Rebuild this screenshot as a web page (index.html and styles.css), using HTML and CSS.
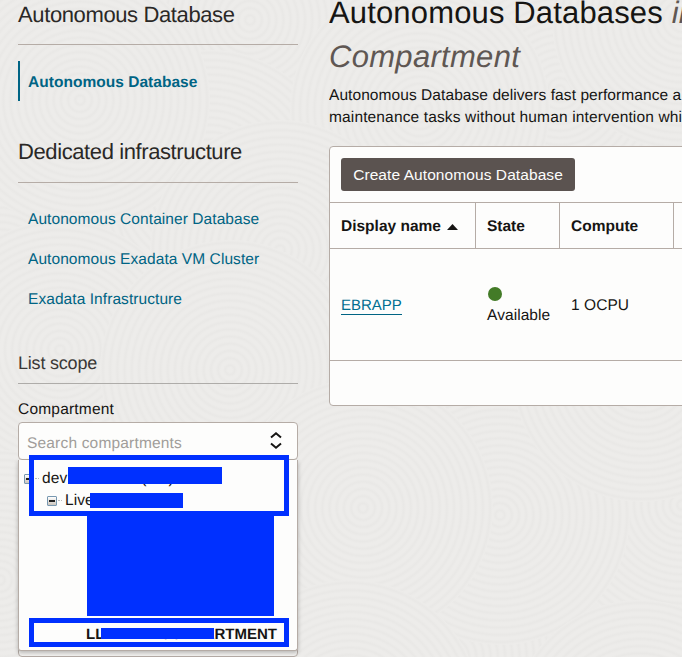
FILE: index.html
```
<!DOCTYPE html>
<html lang="en">
<head>
<meta charset="utf-8">
<title>Autonomous Databases</title>
<link rel="stylesheet" href="styles.css">
</head>
<body>
<svg class="texture" width="682" height="657" aria-hidden="true">
  <defs>
    <radialGradient id="ring" gradientUnits="userSpaceOnUse" cx="0" cy="0" r="7.2" spreadMethod="repeat">
      <stop offset="0" stop-color="#edecea"/><stop offset=".3" stop-color="#edecea"/><stop offset=".65" stop-color="#e9e8e6"/><stop offset="1" stop-color="#edecea"/>
    </radialGradient>
    <circle id="disc" r="130" fill="url(#ring)"/>
  </defs>
  <use href="#disc" x="300" y="-20"/><use href="#disc" x="560" y="90"/>
  <use href="#disc" x="250" y="20"/><use href="#disc" x="0" y="0"/>
  <use href="#disc" x="682" y="20"/><use href="#disc" x="210" y="180"/>
  <use href="#disc" x="420" y="110"/><use href="#disc" x="0" y="270"/>
  <use href="#disc" x="80" y="100"/><use href="#disc" x="280" y="250"/>
  <use href="#disc" x="60" y="350"/><use href="#disc" x="230" y="370"/>
  <use href="#disc" x="0" y="580"/><use href="#disc" x="450" y="657"/>
  <use href="#disc" x="682" y="505"/><use href="#disc" x="500" y="410"/>
  <use href="#disc" x="500" y="515"/><use href="#disc" x="363" y="508"/>
  <use href="#disc" x="642" y="372"/><use href="#disc" x="350" y="710"/>
  <use href="#disc" x="640" y="730"/>
</svg>
<div class="page">
  <aside class="sidebar">
    <h2 class="side-title">Autonomous Database</h2>
    <nav class="side-nav"><a class="nav-link active">Autonomous Database</a></nav>
    <h2 class="side-title second">Dedicated infrastructure</h2>
    <nav class="side-nav links">
      <a class="nav-link">Autonomous Container Database</a>
      <a class="nav-link">Autonomous Exadata VM Cluster</a>
      <a class="nav-link">Exadata Infrastructure</a>
    </nav>
    <h3 class="scope-title">List scope</h3>
    <label class="field-label">Compartment</label>
    <div class="picker">
      <div class="search">
        <span class="placeholder">Search compartments</span>
        <svg class="chevrons" width="12" height="17" viewBox="0 0 12 17"><path d="M1 5.5 6 1.3l5 4.2M1 11.5l5 4.2 5-4.2" fill="none" stroke="#161513" stroke-width="2"/></svg>
      </div>
      <div class="menu">
        <div class="node root"><span class="toggle"></span><span class="dots"></span><span>dev</span><span class="paren">(</span><span class="paren close">)</span></div>
        <div class="node child"><span class="toggle"></span><span class="dots"></span><span>Live</span></div>
        <div class="node leaf"><span>LL</span><span>COMPARTMENT</span></div>
        <span class="mark frame-top"></span>
        <span class="mark cover-root"></span>
        <span class="mark cover-child"></span>
        <span class="mark cover-block"></span>
        <span class="mark frame-bottom"></span>
        <span class="mark cover-leaf"></span>
      </div>
      <div class="under"></div>
    </div>
  </aside>
  <main class="content">
    <h1 class="title">Autonomous Databases <em>in</em><br><em class="comp">Compartment</em></h1>
    <p class="lead">Autonomous Database delivers fast performance a<br><span class="lead-second">maintenance tasks without human intervention whi</span></p>
    <section class="panel">
      <div class="toolbar"><button class="create">Create Autonomous Database</button></div>
      <div class="row head">
        <div class="cell">Display name<svg class="sort" width="11" height="6" viewBox="0 0 11 6"><path d="M0 6 5.5 0 11 6z" fill="#161513"/></svg></div>
        <div class="cell">State</div>
        <div class="cell compute">Compute</div>
        <div class="cell"></div>
      </div>
      <div class="row body">
        <div class="cell"><a class="db">EBRAPP</a></div>
        <div class="cell state"><span class="status"></span><span>Available</span></div>
        <div class="cell">1 OCPU</div>
        <div class="cell"></div>
      </div>
      <div class="foot"></div>
    </section>
  </main>
</div>
</body>
</html>
```
FILE: styles.css
```
* { box-sizing: border-box; }
body { margin: 0; width: 682px; height: 657px; overflow: hidden; background: #ecebe9; color: #161513; font: 15.5px/22px "Liberation Sans", Arial, sans-serif; letter-spacing: .07px; text-rendering: geometricPrecision; }
.texture { position: absolute; inset: 0; z-index: -1; }
.page { display: flex; gap: 31px; padding-left: 18px; width: 682px; height: 657px; overflow: hidden; }
.sidebar { width: 280px; flex: none; }
.side-title { margin: 0; height: 45px; border-bottom: 1px solid #b5aca6; font-size: 22px; line-height: 30px; font-weight: 400; letter-spacing: -.38px; color: #2a2826; }
.side-title.second { margin-top: 36px; height: 46px; letter-spacing: -.4px; }
.side-nav { display: flex; flex-direction: column; padding-top: 16px; }
.nav-link { height: 40px; padding-left: 10px; line-height: 43px; color: #006484; }
.links .nav-link { line-height: 41px; }
.nav-link.active { padding-left: 8px; border-left: 2px solid #006484; font-weight: 700; letter-spacing: .03px; }
.scope-title { margin: 30px 0 0; height: 35px; line-height: 29px; border-bottom: 1px solid #aeaca9; font-size: 18px; font-weight: 400; letter-spacing: -.2px; color: #3a3836; }
.field-label { display: block; margin-top: 14px; height: 24px; line-height: 23px; letter-spacing: .2px; }
.picker { position: relative; }
.search { display: flex; align-items: center; justify-content: space-between; height: 38px; padding: 5px 15px 0 8px; border: 1px solid #b5aca6; border-radius: 4px; background: #fdfdfc; color: #a19d9a; letter-spacing: .18px; }
.chevrons { margin-top: -7px; }
.menu { position: relative; z-index: 1; height: 191px; padding-top: 7px; border: 1px solid #b5aca6; border-top: 0; border-radius: 0 0 3px 3px; background: #fdfdfc; box-shadow: 0 2px 4px rgba(0, 0, 0, .25); }
.node { display: flex; align-items: center; height: 22px; padding-top: 1px; }
.root { padding-left: 5px; }
.child { padding-left: 28px; }
.toggle { width: 10px; height: 10px; margin-right: 1px; border: 1px solid #7898b0; border-radius: 1px; background: linear-gradient(#222, #222) center / 6px 2px no-repeat, linear-gradient(#fff, #cbc5bd); }
.dots { width: 4px; margin-right: 3px; border-top: 1px dotted #bbb; }
.paren { margin-left: 74px; }
.paren.close { margin-left: 22px; }
.leaf { justify-content: space-between; margin: 112px 20px 0 67px; font-size: 15px; font-weight: 700; letter-spacing: 0; }
.mark { position: absolute; background: #0030ff; }
.frame-top, .frame-bottom { left: 10px; width: 260px; border: 5px solid #0030ff; background: none; }
.frame-top { top: -5px; height: 61px; }
.frame-bottom { top: 158px; height: 29px; }
.cover-root { left: 49px; top: 7px; width: 154px; height: 17px; }
.cover-child { left: 71px; top: 33px; width: 93px; height: 15px; }
.cover-block { left: 68px; top: 55px; width: 187px; height: 101px; }
.cover-leaf { left: 82px; top: 168px; width: 113px; height: 11px; }
.under { height: 10px; margin-top: -4px; border: 1px solid #b5aca6; border-radius: 4px; background: #f5f4f2; }
.content { flex: 1; min-width: 0; overflow: hidden; white-space: nowrap; }
.title { margin: -9px 0 0; font-size: 31px; line-height: 44px; font-weight: 400; letter-spacing: .15px; }
.title em { color: #5f5753; }
.title .comp { letter-spacing: .3px; }
.lead { margin: 6px 0 0; }
.lead-second { letter-spacing: .14px; }
.panel { margin-top: 17px; margin-right: -4px; height: 260px; border: 1px solid #b5aca6; border-radius: 4px; background: #fdfdfc; }
.toolbar { height: 55px; padding: 11px; }
.create { display: block; width: 234px; height: 33px; padding: 0; border: 0; border-radius: 3px; background: #5b5350; color: #fdfdfc; font: inherit; letter-spacing: .08px; }
.row { display: grid; grid-template-columns: 146px 84px 114px 1fr; border-top: 1px solid #b5aca6; }
.head { height: 46px; font-weight: 700; letter-spacing: 0; }
.cell { display: flex; align-items: center; padding: 2px 0 0 11px; }
.head .cell { border-right: 1px solid #b5aca6; }
.row .cell:last-child { padding: 0; border: 0; }
.sort { margin: 1px 0 0 6px; }
.body { height: 112px; }
.db { height: 20px; margin-top: -1px; line-height: 21px; border-bottom: 1px solid #006484; color: #006f91; font-size: 15px; letter-spacing: 0; }
.state { flex-direction: column; align-items: flex-start; justify-content: center; }
.status { width: 14px; height: 14px; margin: 2px 0 4px 1px; border-radius: 50%; background: #437b27; }
.foot { border-top: 1px solid #b5aca6; }
```
